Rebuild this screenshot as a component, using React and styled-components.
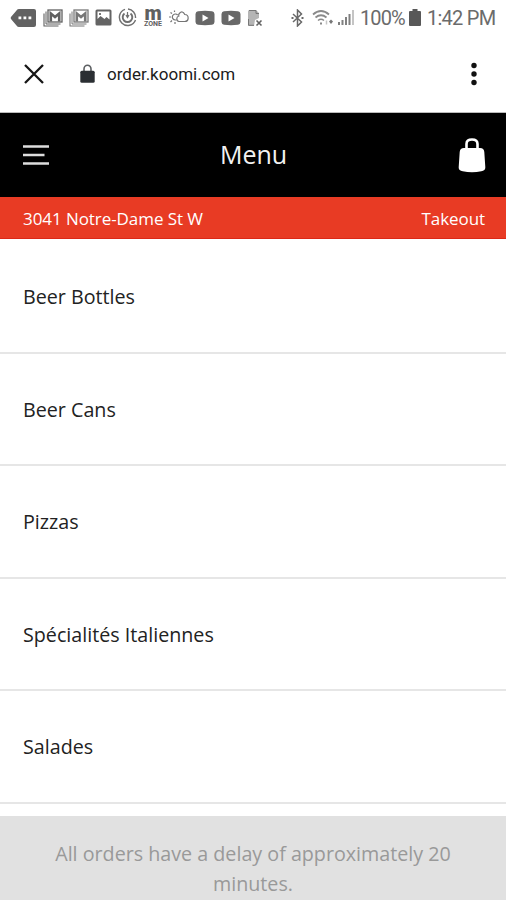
import React from 'react'
import styled, { createGlobalStyle } from 'styled-components'

const categories = [
  'Beer Bottles',
  'Beer Cans',
  'Pizzas',
  'Spécialités Italiennes',
  'Salades',
]

function MailIcon({ color }) {
  return (
    <svg width="20" height="18" viewBox="0 0 20 18" fill="none" stroke={color}>
      <path d="M1 4.500v12.500h14.500" strokeWidth="1.100" />
      <path d="M3 2.500v12.500h14.500" strokeWidth="1" />
      <rect x="5" y="1" width="14" height="12" strokeWidth="1.300" />
      <path d="M7.800 12.500V4.500L12 8l4.200-3.500v8" strokeWidth="2.600" />
    </svg>
  )
}

function VideoIcon() {
  return (
    <svg width="20" height="16" viewBox="0 0 20 16">
      <path
        d="M3 1.200Q10 .300 17 1.200 19.300 1.500 19.500 4v8q-.2 2.500-2.500 2.800-7 .9-14 0Q.7 14.500.5 12V4Q.7 1.500 3 1.200z"
        fill="#686868"
      />
      <path d="M7.500 4.500v7l6-3.500z" fill="#fff" />
    </svg>
  )
}

function StatusIcons() {
  return (
    <Notifications>
      <svg width="27" height="20" viewBox="0 0 27 20">
        <path d="M9 1h15q2 0 2 2v14q0 2-2 2H9q-1.500 0-2.300-1.200L1 11q-.7-1 0-2l5.700-6.800Q7.500 1 9 1z" fill="#626262" />
        <path d="M8.500 8.500h2.800v2.800H8.500zM13.500 8.500h2.800v2.800h-2.800zM18.500 8.500h2.800v2.800h-2.800z" fill="#fff" />
      </svg>
      <MailIcon color="#606060" />
      <MailIcon color="#777" />
      <svg width="17" height="17" viewBox="0 0 17 17">
        <rect x=".5" y=".5" width="16" height="16" rx="1.500" fill="#646464" />
        <path d="M2.500 2.500h12v8l-3-2.500-2 2-4-3-3 3z" fill="#fff" />
        <path d="M4 4h2v2H4z" fill="#777" />
      </svg>
      <svg width="19" height="19" viewBox="0 0 19 19" fill="none" stroke="#707070">
        <path d="M7 1.300A8.300 8.300 0 1 0 17.500 12M10 1a8.300 8.300 0 0 1 7.500 9" strokeWidth="1.400" />
        <path d="M6.500 5.500a4.800 4.800 0 1 0 6 0" strokeWidth="1.900" />
        <path d="M9.500 4v6M8 7l1.500 2.500L11 7" strokeWidth="1.200" />
      </svg>
      <Zone>
        <b>m</b>
        <small>ZONE</small>
      </Zone>
      <svg width="20" height="15" viewBox="0 0 20 15" fill="none" stroke="#747474" strokeWidth="1.200">
        <path d="M7.500 10H6.500a3 3 0 1 1 2.200-4.800M5.500.500v1.500M1.500 2.500l1.500 1M0 7h2M1.500 12l1.500-1.500M6 12v2" />
        <path d="M10 11.500h5.500a3.500 3.500 0 0 0 .3-7Q13.500 0 10.300 3.500q-1 1.200-.5 2.500-2 .5-2 2.800t2.200 2.700z" />
      </svg>
      <VideoIcon />
      <VideoIcon />
      <svg width="16" height="18" viewBox="0 0 16 18">
        <path d="M1 2.500Q1 1 2.500 1H9l3 3v5L8 11l-1 6H2.500Q1 17 1 15.500z" fill="#b5b5b5" />
        <path d="M1.500 10v6.300H7M2 1.500h7v3h3" fill="none" stroke="#777" />
        <path d="M9.500 11.500l5 5m0-5l-5 5" stroke="#606060" strokeWidth="1.600" />
      </svg>
    </Notifications>
  )
}

function App() {
  return (
    <Screen>
      <GlobalStyle />
      <StatusBar>
        <StatusIcons />
        <Bluetooth width="13" height="18" viewBox="0 0 13 18" fill="none" stroke="#686868" strokeWidth="1.500">
          <path d="M2 5l8.500 8L6.500 17V1l4 4L2 13" />
          <path d="M.5 9h2M10.500 9h2" strokeWidth="2" />
        </Bluetooth>
        <Wifi width="22" height="18" viewBox="0 0 22 18" fill="none" stroke="#8a8a8a">
          <path d="M1 5.500Q9 -1.500 17 5.500" strokeWidth="1.800" />
          <path d="M3.500 8.500Q9 4 14.500 8.500" strokeWidth="1.700" />
          <path d="M6 11.500q3-2.500 6 0" strokeWidth="1.500" />
          <path d="M8 14.500h2" strokeWidth="2" />
          <path d="M14.500 11.500v4" strokeWidth="1.500" stroke="#c4c4c4" />
          <path d="M17 12.500l2-2 2 2-2 2.500z" fill="#777" stroke="none" />
        </Wifi>
        <Signal width="18" height="17" viewBox="0 0 18 17">
          <path d="M1 13h2v3H1zM4.500 11h2v5h-2zM8 8h2v8H8zM11.500 5h2v11h-2z" fill="#808080" />
          <path d="M15 1h2v15h-2z" fill="#c5c5c5" />
        </Signal>
        <Percent>100%</Percent>
        <Battery width="12" height="17" viewBox="0 0 12 17">
          <path d="M3.500 0h5v2H11q1 0 1 1v13q0 1-1 1H1q-1 0-1-1V3q0-1 1-1h2.500z" fill="#585858" />
        </Battery>
        <Clock>1:42 PM</Clock>
      </StatusBar>

      <BrowserBar>
        <svg width="20" height="20" viewBox="0 0 20 20" stroke="#161616" strokeWidth="2.300">
          <path d="M1 1l18 18M19 1L1 19" />
        </svg>
        <Lock width="15" height="19" viewBox="0 0 15 19">
          <path d="M4 8V5a3.500 3.800 0 0 1 7 0v3" fill="none" stroke="#5d6063" strokeWidth="1.600" />
          <rect x=".3" y="6.700" width="14.400" height="12" rx="1.500" fill="#2b2f33" />
        </Lock>
        <Url>order.koomi.com</Url>
        <svg width="6" height="24" viewBox="0 0 6 24" fill="#111">
          <circle cx="3" cy="3.500" r="2.700" />
          <circle cx="3" cy="12" r="2.700" />
          <circle cx="3" cy="20.500" r="2.700" />
        </svg>
      </BrowserBar>

      <Header>
        <svg width="26" height="22" viewBox="0 0 26 22" stroke="#ddd" strokeWidth="2.700">
          <path d="M0 2.500h26M0 11h21.500M0 19.500h26" />
        </svg>
        <Title>Menu</Title>
        <svg width="28" height="36" viewBox="0 0 28 36">
          <path d="M8.500 12V7q0-4.500 5.500-4.500T19.500 7v5" fill="none" stroke="#fff" strokeWidth="2.600" />
          <path d="M6 11h16q4 0 4.300 4L27.300 30q.3 3.500-4 4.200-9.300 1.900-18.600 0Q.4 33.500.7 30L1.700 15Q2 11 6 11z" fill="#fff" />
        </svg>
      </Header>

      <LocationBar>
        <span>3041 Notre-Dame St W</span>
        <span>Takeout</span>
      </LocationBar>

      <CategoryList>
        {categories.map((name) => (
          <Category key={name}>{name}</Category>
        ))}
      </CategoryList>

      <Notice>All orders have a delay of approximately 20 minutes.</Notice>
    </Screen>
  )
}

export default App

const GlobalStyle = createGlobalStyle`
  * {
    box-sizing: border-box;
  }
  body {
    margin: 0;
    background: #fff;
  }
  svg {
    display: block;
    flex-shrink: 0;
  }
`

const Screen = styled.div`
  width: 506px;
  height: 900px;
  display: flex;
  flex-direction: column;
  overflow: hidden;
  background: #fff;
  font-family: 'Open Sans', sans-serif;
`

const StatusBar = styled.div`
  height: 35px;
  flex-shrink: 0;
  display: flex;
  align-items: center;
  padding-left: 10px;
  font-family: Roboto, sans-serif;
  font-size: 20px;
  color: #6b6b6b;
  white-space: nowrap;
`

const Notifications = styled.div`
  display: flex;
  align-items: center;
  justify-content: space-between;
  width: 253px;
`

const Zone = styled.div`
  width: 20px;
  height: 22px;
  display: flex;
  flex-direction: column;
  align-items: center;
  color: #606060;
  b {
    font-size: 20px;
    line-height: 12px;
    font-weight: 900;
  }
  small {
    font-size: 7px;
    line-height: 7px;
    margin-top: 2px;
    font-weight: 700;
  }
`

const Bluetooth = styled.svg`
  margin-left: 28px;
`

const Wifi = styled.svg`
  margin-left: 8px;
`

const Signal = styled.svg`
  margin-left: 3px;
`

const Percent = styled.span`
  margin-left: 5px;
  width: 46px;
  letter-spacing: -0.9px;
`

const Battery = styled.svg`
  margin-left: 3px;
`

const Clock = styled.span`
  margin-left: 6px;
  letter-spacing: -0.75px;
`

const BrowserBar = styled.div`
  height: 78px;
  flex-shrink: 0;
  display: flex;
  align-items: center;
  padding: 0 29px 0 24px;
  border-bottom: 1px solid #bbb;
`

const Lock = styled.svg`
  margin-left: 36px;
`

const Url = styled.span`
  flex: 1;
  margin-left: 12px;
  font-family: Roboto, sans-serif;
  font-size: 17px;
  color: #1c1c1c;
`

const Header = styled.header`
  height: 84px;
  flex-shrink: 0;
  display: flex;
  align-items: center;
  justify-content: space-between;
  padding: 0 20px 0 23px;
  background: #000;
`

const Title = styled.h1`
  margin: 0;
  padding-bottom: 2px;
  font-size: 25px;
  font-weight: 400;
  color: #f2f2f2;
`

const LocationBar = styled.div`
  height: 42px;
  flex-shrink: 0;
  display: flex;
  align-items: center;
  justify-content: space-between;
  padding: 1px 21px 0 23px;
  background: #e83b24;
  border-bottom: 1px solid #dc2817;
  font-size: 17px;
  letter-spacing: -0.07px;
  color: #fff;
`

const CategoryList = styled.ul`
  height: 577px;
  flex-shrink: 0;
  margin: 0;
  padding: 2px 0 0;
  list-style: none;
`

const Category = styled.li`
  height: 112.5px;
  display: flex;
  align-items: center;
  padding: 1px 23px 0;
  border-bottom: 2px solid #e6e6e6;
  font-size: 19.7px;
  color: #222;
`

const Notice = styled.footer`
  flex: 1;
  padding: 23px 50px 0;
  background: #e1e1e1;
  font-size: 19.7px;
  line-height: 30px;
  text-align: center;
  color: #999;
`
